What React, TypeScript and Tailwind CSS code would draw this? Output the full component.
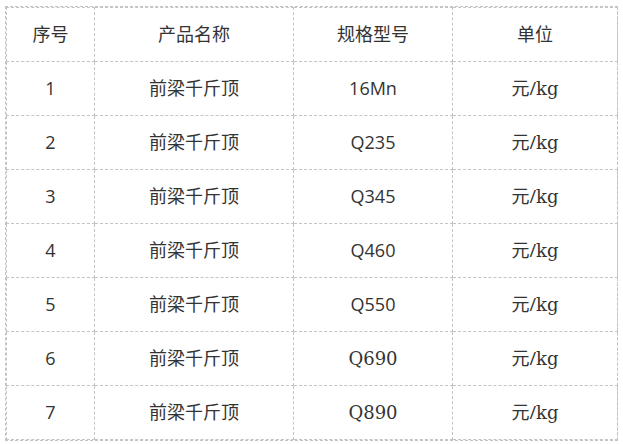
import React from 'react';

// 표 데이터
const ROWS = [
  { no: '1', name: '前梁千斤顶', spec: '16Mn', serif: false },
  { no: '2', name: '前梁千斤顶', spec: 'Q235', serif: false },
  { no: '3', name: '前梁千斤顶', spec: 'Q345', serif: false },
  { no: '4', name: '前梁千斤顶', spec: 'Q460', serif: false },
  { no: '5', name: '前梁千斤顶', spec: 'Q550', serif: false },
  { no: '6', name: '前梁千斤顶', spec: 'Q690', serif: true },
  { no: '7', name: '前梁千斤顶', spec: 'Q890', serif: true },
];

const cell = 'border border-dashed border-[#c4c4c4] text-center align-middle p-0';

const App = () => {
  return (
    <div className="w-[623px] h-[444px] bg-white pt-[6px] pl-[5px] font-['Open_Sans','Noto_Sans_CJK_SC',sans-serif] text-[18px] text-[#333]">
      <div className="w-[613px] border border-dashed border-[#c4c4c4]">
        <table className="w-[611px] border-collapse table-fixed">
          <colgroup>
            <col className="w-[88px]" />
            <col className="w-[199px]" />
            <col className="w-[159px]" />
            <col className="w-[165px]" />
          </colgroup>
          <thead>
            <tr className="h-[54px]">
              <th className={`${cell} font-normal`}>序号</th>
              <th className={`${cell} font-normal`}>产品名称</th>
              <th className={`${cell} font-normal`}>规格型号</th>
              <th className={`${cell} font-normal`}>单位</th>
            </tr>
          </thead>
          <tbody>
            {ROWS.map((r) => (
              <tr key={r.no} className="h-[54px]">
                <td className={cell}>{r.no}</td>
                <td className={cell}>{r.name}</td>
                <td className={cell}>
                  <span className={r.serif ? "font-['DejaVu_Serif']" : ''}>{r.spec}</span>
                </td>
                <td className={cell}>
                  元/<span className="font-['DejaVu_Serif']">kg</span>
                </td>
              </tr>
            ))}
          </tbody>
        </table>
      </div>
    </div>
  );
};

export default App;
